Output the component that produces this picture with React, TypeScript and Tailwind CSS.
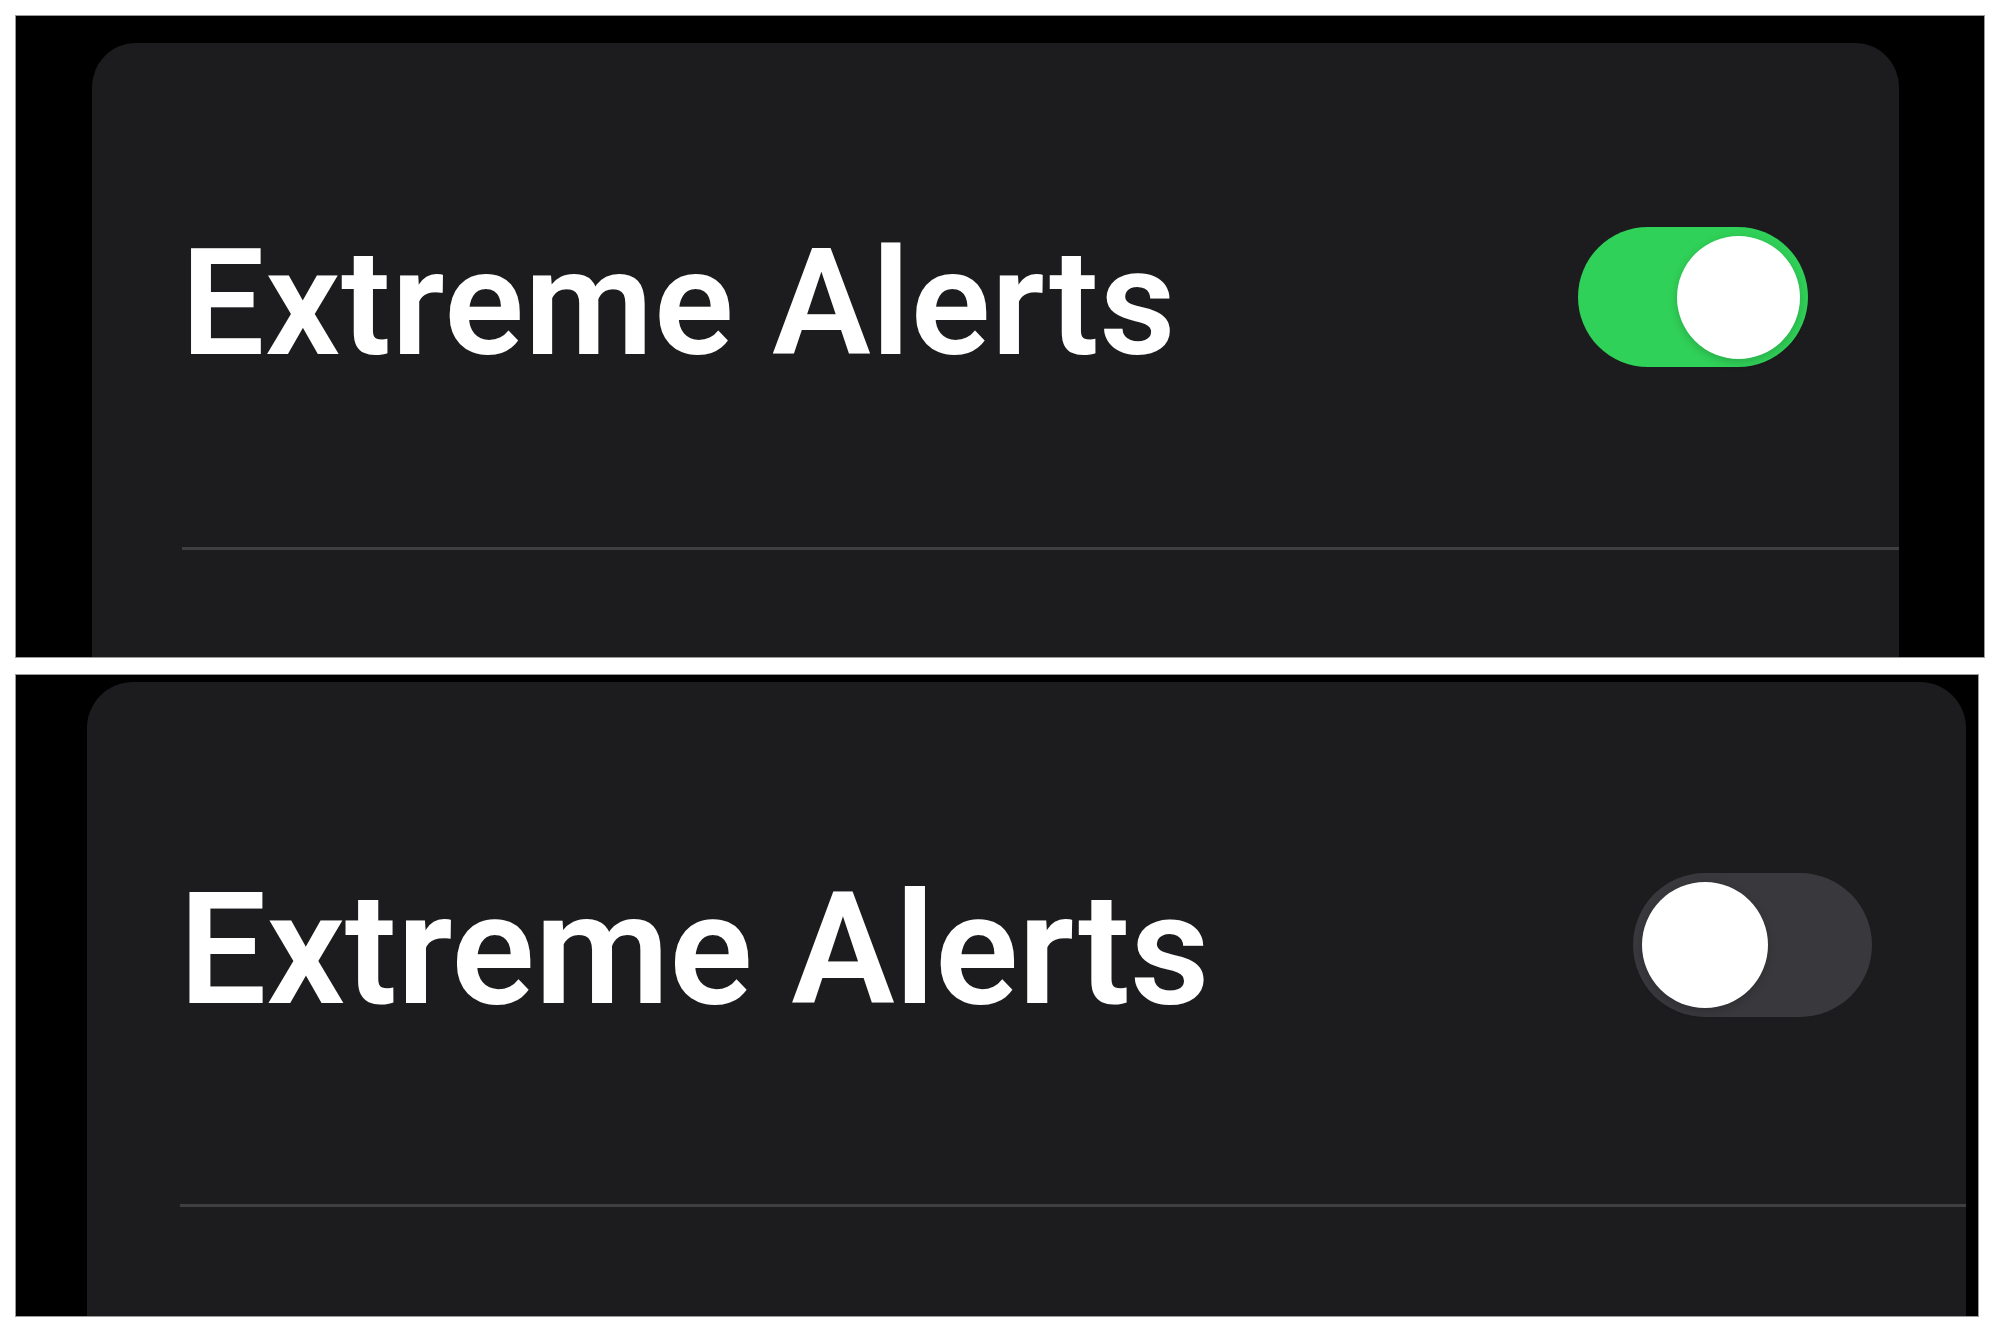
type ToggleProps = {
	on: boolean;
	width: number;
	height: number;
	knob: number;
};

function Toggle({ on, width, height, knob }: ToggleProps) {
	return (
		<div
			className={
				on
					? "flex items-center justify-end rounded-full bg-[#30d158] pr-[8px]"
					: "flex items-center justify-start rounded-full bg-[#39393d] pl-[9px]"
			}
			style={{ width, height }}
		>
			<div
				className="rounded-full bg-white shadow-[0_3px_10px_rgba(0,0,0,0.18)]"
				style={{ width: knob, height: knob }}
			/>
		</div>
	);
}

export default function App() {
	return (
		<div className="min-h-[1333px] w-[2000px] bg-white pl-[15px] pt-[15px] font-['Roboto','Liberation_Sans',sans-serif]">
			<div className="flex flex-col gap-[16px]">
				{/* toggle on */}
				<div className="h-[643px] w-[1970px] overflow-hidden border border-[#9a9a9a] bg-black pl-[76px] pr-[85px] pt-[27px]">
					<div className="h-full rounded-t-[44px] bg-[#1c1c1e]">
						<div className="flex h-[504px] items-center justify-between pl-[89px] pr-[91px]">
							<span className="pt-[18px] text-[148px] font-semibold leading-none tracking-[0.8px] text-white">
								Extreme Alerts
							</span>
							<div className="pt-[4px]">
								<Toggle on width={230} height={140} knob={123} />
							</div>
						</div>
						<div className="ml-[90px] h-[3px] bg-[#3f3f42]" />
					</div>
				</div>

				{/* toggle off */}
				<div className="h-[643px] w-[1964px] overflow-hidden border border-[#9a9a9a] bg-black pl-[71px] pr-[12px] pt-[7px]">
					<div className="h-full rounded-t-[46px] bg-[#1c1c1e]">
						<div className="flex h-[522px] items-center justify-between pl-[92px] pr-[94px]">
							<span className="pt-[14px] text-[155px] font-semibold leading-none text-white">
								Extreme Alerts
							</span>
							<div className="pt-[4px]">
								<Toggle on={false} width={239} height={144} knob={126} />
							</div>
						</div>
						<div className="ml-[93px] h-[3px] bg-[#3f3f42]" />
					</div>
				</div>
			</div>
		</div>
	);
}
